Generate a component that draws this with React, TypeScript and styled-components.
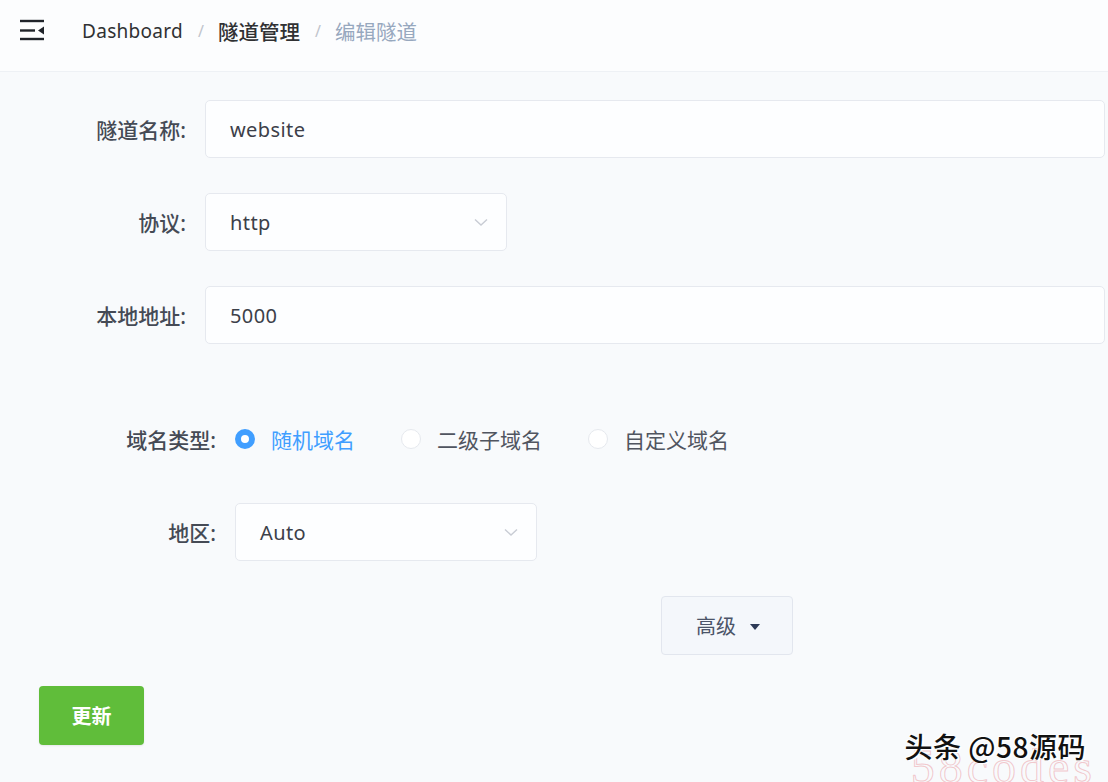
import React from "react";
import styled, { createGlobalStyle } from "styled-components";

const Global = createGlobalStyle`
  html, body { margin: 0; padding: 0; }
  body {
    background: #f8fafc;
    font-family: "Noto Sans", "Noto Sans CJK SC", sans-serif;
    overflow: hidden;
  }
`;

const Page = styled.div`
  position: relative;
  width: 1108px;
  height: 782px;
  overflow: hidden;
  background: #f8fafc;
`;

const Header = styled.header`
  height: 60px;
  padding-bottom: 11px;
  display: flex;
  align-items: center;
  padding-left: 20px;
  background: #fcfdfe;
  border-bottom: 1px solid #eef1f5;
  box-sizing: content-box;
`;

const IconWrap = styled.div`
  width: 24px;
  height: 22px;
  margin-right: 38px;
  display: flex;
  align-items: center;
`;

const Crumbs = styled.nav`
  display: flex;
  align-items: center;
  font-size: 19px;
  padding-top: 2px;
`;

const Crumb = styled.span<{ $kind: "link" | "strong" | "current" }>`
  color: ${(p) => (p.$kind === "current" ? "#97a8be" : "#303133")};
  font-weight: ${(p) => (p.$kind === "strong" ? 500 : 400)};
  font-size: ${(p) => (p.$kind === "link" ? "19px" : "20.5px")};
  letter-spacing: ${(p) => (p.$kind === "link" ? "0.3px" : "0")};
`;

const Sep = styled.span`
  color: #c0c4cc;
  margin: 0 14px 0 15px;
  font-size: 16px;
`;

const Form = styled.main`
  display: flex;
  flex-direction: column;
  padding-top: 28px;
`;

const Row = styled.div<{ $gap?: number }>`
  display: flex;
  align-items: center;
  height: 58px;
  margin-top: ${(p) => p.$gap ?? 35}px;
  padding-right: 3px;
  &:first-child { margin-top: 0; }
`;

const Label = styled.label<{ $w: number }>`
  width: ${(p) => p.$w}px;
  flex: none;
  text-align: right;
  margin-right: 19px;
  font-size: 21px;
  color: #454a55;
  font-weight: 500;
`;

const Field = styled.div<{ $w?: number }>`
  ${(p) => (p.$w ? `width: ${p.$w}px; flex: none;` : "flex: 1;")}
  height: 58px;
  box-sizing: border-box;
  border: 1px solid #e6e9ef;
  border-radius: 5px;
  background: #fdfeff;
  display: flex;
  align-items: center;
  padding: 0 18px 0 24px;
  font-size: 20px;
  color: #3c4049;
  letter-spacing: 0.4px;
`;

const Value = styled.span`
  flex: 1;
`;

const Chevron = () => (
  <svg width="14" height="9" viewBox="0 0 14 9">
    <path d="M1 1.5 L7 7 L13 1.5" fill="none" stroke="#c8ccd4" strokeWidth="1.4" />
  </svg>
);

const RadioGroup = styled.div`
  display: flex;
  align-items: center;
  gap: 46px;
`;

const RadioItem = styled.div<{ $on?: boolean }>`
  display: flex;
  align-items: center;
  gap: 16px;
  font-size: 21px;
  color: ${(p) => (p.$on ? "#409eff" : "#505560")};
`;

const Dot = styled.span<{ $on?: boolean }>`
  width: 20px;
  height: 20px;
  box-sizing: border-box;
  border-radius: 50%;
  border: ${(p) => (p.$on ? "6px solid #409eff" : "1px solid #e6e9ee")};
  background: #fff;
  flex: none;
`;

const AdvButton = styled.button`
  margin-top: 35px;
  margin-left: 661px;
  width: 132px;
  height: 59px;
  border: 1px solid #e2e6ee;
  border-radius: 4px;
  background: #f4f7fb;
  display: flex;
  align-items: center;
  justify-content: center;
  gap: 14px;
  font-family: inherit;
  font-size: 20px;
  color: #4b5468;
  padding: 0 0 0 2px;
`;

const Caret = styled.span`
  width: 0;
  height: 0;
  border-left: 5px solid transparent;
  border-right: 5px solid transparent;
  border-top: 6px solid #2d3a57;
  margin-top: 2px;
`;

const SubmitButton = styled.button`
  margin-top: 31px;
  margin-left: 39px;
  width: 105px;
  height: 59px;
  border: none;
  border-radius: 4px;
  background: #60bd3a;
  color: #fff;
  font-family: inherit;
  font-size: 20px;
  font-weight: 700;
  padding: 0;
  box-shadow: 0 1px 2px rgba(0, 0, 0, 0.08);
`;

const Watermark = styled.div`
  position: absolute;
  right: 22px;
  bottom: 16px;
  font-size: 28px;
  font-weight: 500;
  color: #111;
  text-shadow: 1px 1px 0 #fff, -1px -1px 0 #fff, 2px 1px 0 rgba(255,255,255,0.9);
  font-family: "Noto Sans CJK SC", sans-serif;
  z-index: 2;
  letter-spacing: 0.5px;
`;

const GhostMark = styled.div`
  position: absolute;
  right: 12px;
  bottom: -12px;
  font-family: "Liberation Serif", serif;
  font-size: 48px;
  color: transparent;
  -webkit-text-stroke: 1px rgba(230, 120, 130, 0.4);
  letter-spacing: 4px;
  z-index: 1;
`;

const MenuIcon = () => (
  <svg width="24" height="22" viewBox="0 0 24 22">
    <g fill="none" stroke="#1f2329" strokeWidth="2.4">
      <line x1="0" y1="2" x2="24" y2="2" />
      <line x1="0" y1="11.5" x2="15" y2="11.5" />
      <line x1="0" y1="20" x2="24" y2="20" />
    </g>
    <path d="M24 7.5 L18 11.5 L24 15.5 Z" fill="#1f2329" />
  </svg>
);

export default function App() {
  return (
    <Page>
      <Global />
      <Header>
        <IconWrap>
          <MenuIcon />
        </IconWrap>
        <Crumbs>
          <Crumb $kind="link">Dashboard</Crumb>
          <Sep>/</Sep>
          <Crumb $kind="strong">隧道管理</Crumb>
          <Sep>/</Sep>
          <Crumb $kind="current">编辑隧道</Crumb>
        </Crumbs>
      </Header>
      <Form>
        <Row>
          <Label $w={186}>隧道名称:</Label>
          <Field>
            <Value>website</Value>
          </Field>
        </Row>
        <Row>
          <Label $w={186}>协议:</Label>
          <Field $w={302}>
            <Value>http</Value>
            <Chevron />
          </Field>
        </Row>
        <Row>
          <Label $w={186}>本地地址:</Label>
          <Field>
            <Value>5000</Value>
          </Field>
        </Row>
        <Row $gap={66}>
          <Label $w={216}>域名类型:</Label>
          <RadioGroup>
            <RadioItem $on>
              <Dot $on />
              随机域名
            </RadioItem>
            <RadioItem>
              <Dot />
              二级子域名
            </RadioItem>
            <RadioItem>
              <Dot />
              自定义域名
            </RadioItem>
          </RadioGroup>
        </Row>
        <Row>
          <Label $w={216}>地区:</Label>
          <Field $w={302}>
            <Value>Auto</Value>
            <Chevron />
          </Field>
        </Row>
        <AdvButton>
          高级
          <Caret />
        </AdvButton>
        <SubmitButton>更新</SubmitButton>
      </Form>
      <GhostMark>58codes</GhostMark>
      <Watermark>头条 @58源码</Watermark>
    </Page>
  );
}
